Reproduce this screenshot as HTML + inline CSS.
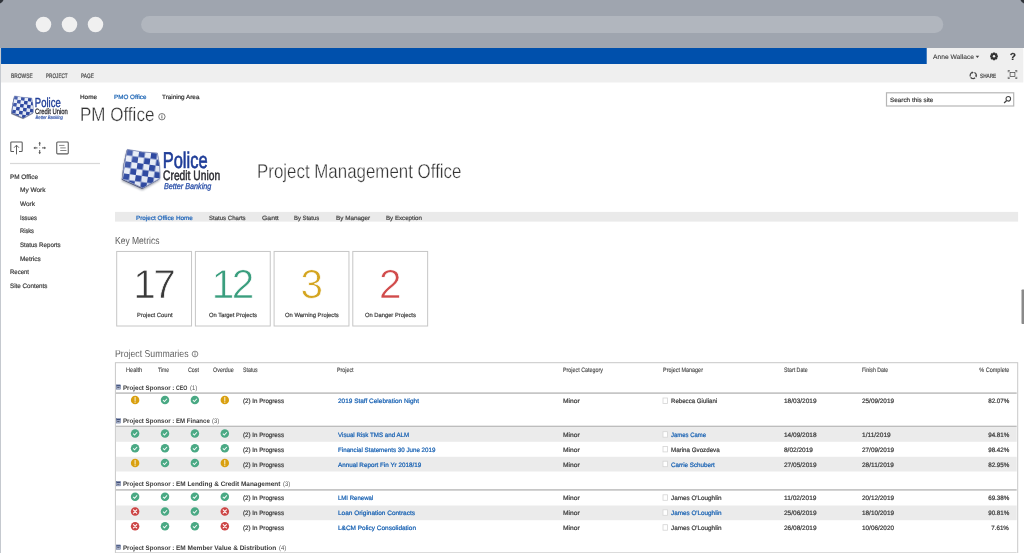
<!DOCTYPE html>
<html><head><meta charset="utf-8"><title>PM Office</title>
<style>
html,body{margin:0;padding:0;}
body{width:1024px;height:553px;overflow:hidden;position:relative;background:#fff;font-family:"Liberation Sans",sans-serif;text-rendering:geometricPrecision;}
.t{position:absolute;white-space:nowrap;}
.abs{position:absolute;}
#root{position:absolute;left:0;top:0;width:1024px;height:553px;will-change:transform;}
</style></head><body>
<div id="root">
<svg class="abs" style="left:0;top:0" width="1024" height="553" viewBox="0 0 1024 553">
<rect x="0" y="0" width="1024" height="553" fill="#9fa5af"/>
<path d="M0 0H3.5Q2.6 2.6 0 3.5Z" fill="#30343a"/><path d="M1024 0H1020.5Q1021.4 2.6 1024 3.5Z" fill="#30343a"/>
<circle cx="43.5" cy="24.6" r="7.75" fill="#f0f0f0"/>
<circle cx="69.5" cy="24.6" r="7.75" fill="#f0f0f0"/>
<circle cx="95.5" cy="24.6" r="7.75" fill="#f0f0f0"/>
<rect x="141.1" y="16.1" width="802.15" height="16.9" fill="#b1b6be" rx="8.45"/>
<rect x="0.6" y="48" width="1023.4" height="505" fill="#fff"/>
<rect x="1.05" y="48" width="925.8" height="16" fill="#0050ac"/>
<rect x="926.85" y="48" width="96.45" height="16" fill="#efefef"/>
<rect x="1.05" y="64" width="1022.25" height="18.5" fill="#efefef"/>
<rect x="886.5" y="92.8" width="127.2" height="13.2" fill="none" stroke="#b6b6b6" stroke-width="1.2"/>
<rect x="10" y="162.9" width="90" height="1.2" fill="#d8d8d8"/>
<rect x="115" y="211.9" width="903.1" height="9.7" fill="#eaeaea"/>
<rect x="116.7" y="251.45" width="74.85" height="74.55" fill="none" stroke="#c6c6c6" stroke-width="1"/>
<rect x="195.4" y="251.45" width="74.85" height="74.55" fill="none" stroke="#c6c6c6" stroke-width="1"/>
<rect x="274.1" y="251.45" width="74.85" height="74.55" fill="none" stroke="#c6c6c6" stroke-width="1"/>
<rect x="352.8" y="251.45" width="74.85" height="74.55" fill="none" stroke="#c6c6c6" stroke-width="1"/>
<rect x="115.4" y="362.7" width="902.3" height="207.3" fill="none" stroke="#c8c8c8" stroke-width="1"/>
<rect x="115.9" y="392.35" width="900.8" height="1.5" fill="#bdbdbd"/>
<rect x="663" y="398" width="4.5" height="5.5" fill="#fff" stroke="#d4d4d4" stroke-width="0.8"/>
<rect x="115.9" y="425.65" width="900.8" height="1.5" fill="#bdbdbd"/>
<rect x="115.9" y="427.1" width="900.8" height="14.7" fill="#ebebeb"/>
<rect x="663" y="431.7" width="4.5" height="5.5" fill="#fff" stroke="#d4d4d4" stroke-width="0.8"/>
<rect x="663" y="446.4" width="4.5" height="5.5" fill="#fff" stroke="#d4d4d4" stroke-width="0.8"/>
<rect x="115.9" y="456.8" width="900.8" height="14.7" fill="#ebebeb"/>
<rect x="663" y="461.2" width="4.5" height="5.5" fill="#fff" stroke="#d4d4d4" stroke-width="0.8"/>
<rect x="115.9" y="489.15" width="900.8" height="1.5" fill="#bdbdbd"/>
<rect x="663" y="494.8" width="4.5" height="5.5" fill="#fff" stroke="#d4d4d4" stroke-width="0.8"/>
<rect x="115.9" y="505.5" width="900.8" height="14.7" fill="#ebebeb"/>
<rect x="663" y="509.8" width="4.5" height="5.5" fill="#fff" stroke="#d4d4d4" stroke-width="0.8"/>
<rect x="663" y="524.7" width="4.5" height="5.5" fill="#fff" stroke="#d4d4d4" stroke-width="0.8"/>
<rect x="115.9" y="552.45" width="900.8" height="1.5" fill="#bdbdbd"/>
<rect x="1021.5" y="289.5" width="4" height="34.5" fill="#8a8a8a" rx="0.8"/>
</svg>

<div class="t" style="left:933px;top:52px;height:11px;line-height:11px;font-size:6.6px;color:#3c3c3c;transform:scaleX(1.013);transform-origin:0 50%;-webkit-text-stroke:0.1px;">Anne Wallace</div>
<svg class="abs" style="left:975px;top:55px" width="5" height="3" viewBox="-0.83 -1.14 6.94 4.29" preserveAspectRatio="none"><path d="M0 0H5L2.5 3Z" fill="#444"/></svg>
<svg class="abs" style="left:989px;top:51px" width="10" height="10" viewBox="-0.5 -0.8 10 10" preserveAspectRatio="none"><g transform="translate(4.5,4.5) scale(0.95)" fill="#333"><rect x="-1.15" y="-4.100" width="2.300" height="2" rx="0.300" transform="rotate(0)"/><rect x="-1.15" y="-4.100" width="2.300" height="2" rx="0.300" transform="rotate(45)"/><rect x="-1.15" y="-4.100" width="2.300" height="2" rx="0.300" transform="rotate(90)"/><rect x="-1.15" y="-4.100" width="2.300" height="2" rx="0.300" transform="rotate(135)"/><rect x="-1.15" y="-4.100" width="2.300" height="2" rx="0.300" transform="rotate(180)"/><rect x="-1.15" y="-4.100" width="2.300" height="2" rx="0.300" transform="rotate(225)"/><rect x="-1.15" y="-4.100" width="2.300" height="2" rx="0.300" transform="rotate(270)"/><rect x="-1.15" y="-4.100" width="2.300" height="2" rx="0.300" transform="rotate(315)"/><circle r="3.050"/><circle r="1.250" fill="#efefef"/></g></svg>
<div class="t" style="left:1009.8px;top:49px;height:17px;line-height:17px;font-size:10.2px;color:#2e2e2e;font-weight:bold;-webkit-text-stroke:0.2px;">?</div>
<div class="t" style="left:10.8px;top:71px;height:11px;line-height:11px;font-size:6.4px;color:#4a4a4a;transform:scaleX(0.763);transform-origin:0 50%;-webkit-text-stroke:0.2px;">BROWSE</div>
<div class="t" style="left:45.8px;top:71px;height:11px;line-height:11px;font-size:6.4px;color:#4a4a4a;transform:scaleX(0.727);transform-origin:0 50%;-webkit-text-stroke:0.2px;">PROJECT</div>
<div class="t" style="left:80.8px;top:71px;height:11px;line-height:11px;font-size:6.4px;color:#4a4a4a;transform:scaleX(0.751);transform-origin:0 50%;-webkit-text-stroke:0.2px;">PAGE</div>
<svg class="abs" style="left:969px;top:71px" width="9" height="9" viewBox="-0 -0.38 17.14 17.14" preserveAspectRatio="none"><g fill="none" stroke="#444" stroke-width="2.3"><path d="M2.6 10.2A5.8 5.8 0 0 1 6.6 2.4"/><path d="M10.2 2.6A5.8 5.8 0 0 1 13.600 9.400"/><path d="M11.600 12.600A5.800 5.800 0 0 1 4.600 12.800"/></g><g fill="#444"><path d="M5.200 0.600L9 2.200L6 4.800Z"/><path d="M15.600 8L13.800 11.800L11.400 8.600Z"/><path d="M2.400 11.200L6 12L4 15.200Z"/></g></svg>
<div class="t" style="left:980px;top:71px;height:11px;line-height:11px;font-size:6.2px;color:#444;transform:scaleX(0.763);transform-origin:0 50%;-webkit-text-stroke:0.2px;">SHARE</div>
<svg class="abs" style="left:1007px;top:70px" width="11" height="9" viewBox="-1.4 -0 22 18" preserveAspectRatio="none"><g fill="none" stroke="#4a4a4a" stroke-width="1.500"><rect x="4.800" y="5" width="9.600" height="8.200"/></g><g fill="none" stroke="#4a4a4a" stroke-width="1.300"><path d="M1 4.600V1H4.400M14.800 1H18.200V4.600M18.200 13.600V17.200H14.800M4.400 17.200H1V13.600"/><path d="M1 1L3.600 3.800M18.200 1L15.600 3.800M18.200 17.200L15.600 14.400M1 17.200L3.600 14.400"/></g></svg>
<svg class="abs" style="left:8px;top:92px" width="64" height="31" viewBox="-0 -1.39 111.3 53.91" preserveAspectRatio="none">
<defs>
<clipPath id="sca"><path d="M11.3 5.4 Q26 8.6 41.4 9.1 Q44.6 22 44 34.4 L26.9 44 L6.4 34.9 Q7.6 19 11.3 5.4Z"/></clipPath>
<pattern id="cka" width="12.2" height="12.2" patternUnits="userSpaceOnUse" patternTransform="translate(11.1,5.2) rotate(8)">
<rect width="12.2" height="12.2" fill="#e6ebf6"/><rect width="6.1" height="6.1" fill="#233f9c"/><rect x="6.1" y="6.1" width="6.1" height="6.1" fill="#233f9c"/>
</pattern>
<linearGradient id="lga" x1="0" y1="0" x2="1" y2="1"><stop offset="0" stop-color="#fff" stop-opacity="0.32"/><stop offset="0.45" stop-color="#fff" stop-opacity="0.05"/><stop offset="1" stop-color="#0a1a60" stop-opacity="0.18"/></linearGradient>
<filter id="bla" x="-20%" y="-20%" width="140%" height="140%"><feGaussianBlur stdDeviation="1.3"/></filter>
</defs>
<path d="M11.3 5.4 Q26 8.6 41.4 9.1 Q44.6 22 44 34.4 L26.9 44 L6.4 34.9 Q7.6 19 11.3 5.4Z" transform="translate(-0.6,2.2)" fill="#50566a" opacity="0.55" filter="url(#bla)"/>
<path d="M11.3 5.4 Q26 8.6 41.4 9.1 Q44.6 22 44 34.4 L26.9 44 L6.4 34.9 Q7.6 19 11.3 5.4Z" transform="translate(-0.7,0.9)" fill="#4a5170"/>
<path d="M11.3 5.4 Q26 8.6 41.4 9.1 Q44.6 22 44 34.4 L26.9 44 L6.4 34.9 Q7.6 19 11.3 5.4Z" fill="#233f9c"/>
<g clip-path="url(#sca)"><rect x="0" y="0" width="52" height="52" fill="url(#cka)"/><rect x="0" y="0" width="52" height="52" fill="url(#lga)"/></g>
<path d="M11.3 5.4 Q26 8.6 41.4 9.1 Q44.6 22 44 34.4 L26.9 44 L6.4 34.9 Q7.6 19 11.3 5.4Z" fill="none" stroke="#8d97bd" stroke-width="0.9"/>
<text x="46.7" y="24.3" font-family="Liberation Sans, sans-serif" font-size="22.8" fill="#1f3d98" stroke="#1f3d98" stroke-width="0.7" textLength="44.9" lengthAdjust="spacingAndGlyphs">Police</text>
<text x="47.1" y="36" font-family="Liberation Sans, sans-serif" font-size="13.6" fill="#2d2d33" stroke="#2d2d33" stroke-width="0.5" textLength="57" lengthAdjust="spacingAndGlyphs">Credit Union</text>
<text x="48" y="45.1" font-family="Liberation Sans, sans-serif" font-style="italic" font-size="8.4" fill="#2a4fa8" stroke="#2a4fa8" stroke-width="0.3" textLength="47.3" lengthAdjust="spacingAndGlyphs">Better Banking</text>
</svg>
<svg class="abs" style="left:116px;top:144px" width="110" height="52" viewBox="-0 -0 110 52" preserveAspectRatio="none">
<defs>
<clipPath id="scb"><path d="M11.3 5.4 Q26 8.6 41.4 9.1 Q44.6 22 44 34.4 L26.9 44 L6.4 34.9 Q7.6 19 11.3 5.4Z"/></clipPath>
<pattern id="ckb" width="12.2" height="12.2" patternUnits="userSpaceOnUse" patternTransform="translate(11.1,5.2) rotate(8)">
<rect width="12.2" height="12.2" fill="#e6ebf6"/><rect width="6.1" height="6.1" fill="#233f9c"/><rect x="6.1" y="6.1" width="6.1" height="6.1" fill="#233f9c"/>
</pattern>
<linearGradient id="lgb" x1="0" y1="0" x2="1" y2="1"><stop offset="0" stop-color="#fff" stop-opacity="0.32"/><stop offset="0.45" stop-color="#fff" stop-opacity="0.05"/><stop offset="1" stop-color="#0a1a60" stop-opacity="0.18"/></linearGradient>
<filter id="blb" x="-20%" y="-20%" width="140%" height="140%"><feGaussianBlur stdDeviation="1.3"/></filter>
</defs>
<path d="M11.3 5.4 Q26 8.6 41.4 9.1 Q44.6 22 44 34.4 L26.9 44 L6.4 34.9 Q7.6 19 11.3 5.4Z" transform="translate(-0.6,2.2)" fill="#50566a" opacity="0.55" filter="url(#blb)"/>
<path d="M11.3 5.4 Q26 8.6 41.4 9.1 Q44.6 22 44 34.4 L26.9 44 L6.4 34.9 Q7.6 19 11.3 5.4Z" transform="translate(-0.7,0.9)" fill="#4a5170"/>
<path d="M11.3 5.4 Q26 8.6 41.4 9.1 Q44.6 22 44 34.4 L26.9 44 L6.4 34.9 Q7.6 19 11.3 5.4Z" fill="#233f9c"/>
<g clip-path="url(#scb)"><rect x="0" y="0" width="52" height="52" fill="url(#ckb)"/><rect x="0" y="0" width="52" height="52" fill="url(#lgb)"/></g>
<path d="M11.3 5.4 Q26 8.6 41.4 9.1 Q44.6 22 44 34.4 L26.9 44 L6.4 34.9 Q7.6 19 11.3 5.4Z" fill="none" stroke="#8d97bd" stroke-width="0.9"/>
<text x="46.7" y="24.3" font-family="Liberation Sans, sans-serif" font-size="22.8" fill="#1f3d98" stroke="#1f3d98" stroke-width="0.7" textLength="44.9" lengthAdjust="spacingAndGlyphs">Police</text>
<text x="47.1" y="36" font-family="Liberation Sans, sans-serif" font-size="13.6" fill="#2d2d33" stroke="#2d2d33" stroke-width="0.5" textLength="57" lengthAdjust="spacingAndGlyphs">Credit Union</text>
<text x="48" y="45.1" font-family="Liberation Sans, sans-serif" font-style="italic" font-size="8.4" fill="#2a4fa8" stroke="#2a4fa8" stroke-width="0.3" textLength="47.3" lengthAdjust="spacingAndGlyphs">Better Banking</text>
</svg>
<div class="t" style="left:80px;top:92px;height:11px;line-height:11px;font-size:6.2px;color:#333;transform:scaleX(1.028);transform-origin:0 50%;-webkit-text-stroke:0.2px;">Home</div>
<div class="t" style="left:113.7px;top:92px;height:11px;line-height:11px;font-size:6.2px;color:#1660b2;transform:scaleX(1.018);transform-origin:0 50%;-webkit-text-stroke:0.2px;">PMO Office</div>
<div class="t" style="left:162px;top:92px;height:11px;line-height:11px;font-size:6.2px;color:#333;transform:scaleX(1.023);transform-origin:0 50%;-webkit-text-stroke:0.2px;">Training Area</div>
<div class="t" style="left:80.1px;top:100px;height:30px;line-height:30px;font-size:19.5px;color:#333;transform:scaleX(0.872);transform-origin:0 50%;-webkit-text-stroke:0.3px #fff;">PM Office</div>
<svg class="abs" style="left:158px;top:113px" width="8" height="8" viewBox="-0.43 -0 17.3 17.3" preserveAspectRatio="none"><circle cx="8" cy="8" r="6.9" fill="none" stroke="#555" stroke-width="1.7"/><rect x="7" y="6.8" width="2" height="5" fill="#555"/><rect x="7" y="3.8" width="2" height="2" fill="#555"/></svg>
<div class="t" style="left:889.5px;top:95px;height:11px;line-height:11px;font-size:6.2px;color:#3c3c3c;transform:scaleX(1.026);transform-origin:0 50%;-webkit-text-stroke:0.2px;">Search this site</div>
<svg class="abs" style="left:1003px;top:95px" width="10" height="10" viewBox="-0 -0 10 10" preserveAspectRatio="none"><circle cx="5.300" cy="3.800" r="2.300" fill="none" stroke="#444" stroke-width="1.050"/><path d="M3.700 5.500L1.100 7.900" stroke="#444" stroke-width="1.300"/></svg>
<svg class="abs" style="left:9px;top:141px" width="63" height="15" viewBox="-0.5 -0 63 15" preserveAspectRatio="none">
<g fill="none" stroke="#585858" stroke-width="1.05">
<path d="M4.5 10.5H2.1Q1.3 10.5 1.3 9.7V1.8Q1.3 1 2.1 1H11.9Q12.700 1 12.700 1.800V9.700Q12.700 10.500 11.900 10.500H9.500"/>
<path d="M7 13.400V4.300M4.600 6.700L7 4.200L9.400 6.700" stroke-width="0.95"/>
<rect x="47.250" y="1.050" width="11.500" height="11.800" rx="0.900"/>
</g>
<g fill="none" stroke="#7a7a7a" stroke-width="0.9"><path d="M49.600 4.400H55M50.750 6.900H56.200M50.750 9.500H57"/></g>
<g fill="none" stroke="#555" stroke-width="1"><path d="M30.200 1.800V4.800M30.200 9V12.200M25 6.900H28M32.500 6.900H35.600"/></g>
<g fill="#585858"><path d="M30.200 0.700L31.500 2.600H28.900ZM30.200 13.200L31.500 11.300H28.900ZM23.900 6.900L25.800 5.600V8.200ZM36.600 6.900L34.700 5.600V8.200Z"/><circle cx="30.200" cy="6.900" r="0.450"/></g>
</svg>
<div class="t" style="left:10px;top:172px;height:11px;line-height:11px;font-size:6.4px;color:#3c3c3c;-webkit-text-stroke:0.2px;">PM Office</div>
<div class="t" style="left:20px;top:185px;height:11px;line-height:11px;font-size:6.4px;color:#3c3c3c;transform:scaleX(1.015);transform-origin:0 50%;-webkit-text-stroke:0.2px;">My Work</div>
<div class="t" style="left:20px;top:199px;height:11px;line-height:11px;font-size:6.4px;color:#3c3c3c;transform:scaleX(1.012);transform-origin:0 50%;-webkit-text-stroke:0.2px;">Work</div>
<div class="t" style="left:20px;top:213px;height:11px;line-height:11px;font-size:6.4px;color:#3c3c3c;transform:scaleX(0.919);transform-origin:0 50%;-webkit-text-stroke:0.2px;">Issues</div>
<div class="t" style="left:20px;top:226px;height:11px;line-height:11px;font-size:6.4px;color:#3c3c3c;transform:scaleX(0.895);transform-origin:0 50%;-webkit-text-stroke:0.2px;">Risks</div>
<div class="t" style="left:20px;top:240px;height:11px;line-height:11px;font-size:6.4px;color:#3c3c3c;transform:scaleX(0.961);transform-origin:0 50%;-webkit-text-stroke:0.2px;">Status Reports</div>
<div class="t" style="left:20px;top:254px;height:11px;line-height:11px;font-size:6.4px;color:#3c3c3c;-webkit-text-stroke:0.2px;">Metrics</div>
<div class="t" style="left:10px;top:267px;height:11px;line-height:11px;font-size:6.4px;color:#3c3c3c;transform:scaleX(0.937);transform-origin:0 50%;-webkit-text-stroke:0.2px;">Recent</div>
<div class="t" style="left:10px;top:281px;height:11px;line-height:11px;font-size:6.4px;color:#3c3c3c;transform:scaleX(0.976);transform-origin:0 50%;-webkit-text-stroke:0.2px;">Site Contents</div>
<div class="t" style="left:257px;top:156px;height:32px;line-height:32px;font-size:20.1px;color:#333;transform:scaleX(0.841);transform-origin:0 50%;-webkit-text-stroke:0.35px #fff;">Project Management Office</div>
<div class="t" style="left:135.5px;top:213px;height:11px;line-height:11px;font-size:6.2px;color:#1a62b8;transform:scaleX(1.030);transform-origin:0 50%;-webkit-text-stroke:0.2px;">Project Office Home</div>
<div class="t" style="left:209px;top:213px;height:11px;line-height:11px;font-size:6.2px;color:#444;transform:scaleX(0.977);transform-origin:0 50%;-webkit-text-stroke:0.2px;">Status Charts</div>
<div class="t" style="left:262px;top:213px;height:11px;line-height:11px;font-size:6.2px;color:#444;transform:scaleX(1.108);transform-origin:0 50%;-webkit-text-stroke:0.2px;">Gantt</div>
<div class="t" style="left:293.8px;top:213px;height:11px;line-height:11px;font-size:6.2px;color:#444;transform:scaleX(0.953);transform-origin:0 50%;-webkit-text-stroke:0.2px;">By Status</div>
<div class="t" style="left:335.8px;top:213px;height:11px;line-height:11px;font-size:6.2px;color:#444;transform:scaleX(1.023);transform-origin:0 50%;-webkit-text-stroke:0.2px;">By Manager</div>
<div class="t" style="left:386.2px;top:213px;height:11px;line-height:11px;font-size:6.2px;color:#444;transform:scaleX(0.995);transform-origin:0 50%;-webkit-text-stroke:0.2px;">By Exception</div>
<div class="t" style="left:114.8px;top:233px;height:17px;line-height:17px;font-size:10.2px;color:#3a3a3a;transform:scaleX(0.835);transform-origin:0 50%;-webkit-text-stroke:0.12px #fff;">Key Metrics</div>
<div class="t" style="left:116.2px;width:76.5px;text-align:center;top:262px;height:44px;line-height:44px;font-size:40.5px;color:#3a3a3a;letter-spacing:-2.6px;text-indent:-2.6px;-webkit-text-stroke:0.7px #fff">17</div>
<div class="t" style="left:136.65px;top:311px;height:10px;line-height:10px;font-size:6.0px;color:#3c3c3c;transform:scaleX(0.977);transform-origin:0 50%;-webkit-text-stroke:0.2px;">Project Count</div>
<div class="t" style="left:194.8px;width:76.5px;text-align:center;top:262px;height:44px;line-height:44px;font-size:40.5px;color:#3a9e7e;letter-spacing:-2.6px;text-indent:-2.6px;-webkit-text-stroke:0.7px #fff">12</div>
<div class="t" style="left:209px;top:311px;height:10px;line-height:10px;font-size:6.0px;color:#3c3c3c;transform:scaleX(0.968);transform-origin:0 50%;-webkit-text-stroke:0.2px;">On Target Projects</div>
<div class="t" style="left:273.4px;width:76.5px;text-align:center;top:262px;height:44px;line-height:44px;font-size:40.5px;color:#d4a520;letter-spacing:-2.6px;text-indent:-2.6px;-webkit-text-stroke:0.7px #fff">3</div>
<div class="t" style="left:284.75px;top:311px;height:10px;line-height:10px;font-size:6.0px;color:#3c3c3c;transform:scaleX(0.974);transform-origin:0 50%;-webkit-text-stroke:0.2px;">On Warning Projects</div>
<div class="t" style="left:352px;width:76.5px;text-align:center;top:262px;height:44px;line-height:44px;font-size:40.5px;color:#d14b4b;letter-spacing:-2.6px;text-indent:-2.6px;-webkit-text-stroke:0.7px #fff">2</div>
<div class="t" style="left:364.8px;top:311px;height:10px;line-height:10px;font-size:6.0px;color:#3c3c3c;transform:scaleX(0.964);transform-origin:0 50%;-webkit-text-stroke:0.2px;">On Danger Projects</div>
<div class="t" style="left:114.8px;top:347px;height:15px;line-height:15px;font-size:10.0px;color:#3a3a3a;transform:scaleX(0.870);transform-origin:0 50%;-webkit-text-stroke:0.12px #fff;">Project Summaries</div>
<svg class="abs" style="left:191px;top:350px" width="8" height="8" viewBox="-1.7 -1.7 19.39 19.39" preserveAspectRatio="none"><circle cx="8" cy="8" r="6.9" fill="none" stroke="#555" stroke-width="1.7"/><rect x="7" y="6.8" width="2" height="5" fill="#555"/><rect x="7" y="3.8" width="2" height="2" fill="#555"/></svg>
<div class="t" style="left:125.7px;top:365px;height:11px;line-height:11px;font-size:6.3px;color:#484848;transform:scaleX(0.890);transform-origin:0 50%;-webkit-text-stroke:0.14px;">Health</div>
<div class="t" style="left:158.2px;top:365px;height:11px;line-height:11px;font-size:6.3px;color:#484848;transform:scaleX(0.799);transform-origin:0 50%;-webkit-text-stroke:0.14px;">Time</div>
<div class="t" style="left:188px;top:365px;height:11px;line-height:11px;font-size:6.3px;color:#484848;transform:scaleX(0.849);transform-origin:0 50%;-webkit-text-stroke:0.14px;">Cost</div>
<div class="t" style="left:213px;top:365px;height:11px;line-height:11px;font-size:6.3px;color:#484848;transform:scaleX(0.857);transform-origin:0 50%;-webkit-text-stroke:0.14px;">Overdue</div>
<div class="t" style="left:243.2px;top:365px;height:11px;line-height:11px;font-size:6.3px;color:#484848;transform:scaleX(0.823);transform-origin:0 50%;-webkit-text-stroke:0.14px;">Status</div>
<div class="t" style="left:336.7px;top:365px;height:11px;line-height:11px;font-size:6.3px;color:#484848;transform:scaleX(0.842);transform-origin:0 50%;-webkit-text-stroke:0.14px;">Project</div>
<div class="t" style="left:563.2px;top:365px;height:11px;line-height:11px;font-size:6.3px;color:#484848;transform:scaleX(0.852);transform-origin:0 50%;-webkit-text-stroke:0.14px;">Project Category</div>
<div class="t" style="left:662.5px;top:365px;height:11px;line-height:11px;font-size:6.3px;color:#484848;transform:scaleX(0.865);transform-origin:0 50%;-webkit-text-stroke:0.14px;">Project Manager</div>
<div class="t" style="left:783.5px;top:365px;height:11px;line-height:11px;font-size:6.3px;color:#484848;transform:scaleX(0.836);transform-origin:0 50%;-webkit-text-stroke:0.14px;">Start Date</div>
<div class="t" style="left:861.7px;top:365px;height:11px;line-height:11px;font-size:6.3px;color:#484848;transform:scaleX(0.822);transform-origin:0 50%;-webkit-text-stroke:0.14px;">Finish Date</div>
<div class="t" style="right:14.7px;top:365px;height:11px;line-height:11px;font-size:6.3px;color:#484848;transform:scaleX(0.874);transform-origin:100% 50%;-webkit-text-stroke:0.14px;">% Complete</div>
<svg class="abs" style="left:116px;top:384px" width="5" height="6" viewBox="-0 -1.25 10.42 12.5" preserveAspectRatio="none"><rect x="0.5" y="0.5" width="9" height="9" fill="#b4bed6" stroke="#56648c" stroke-width="1"/><rect x="1" y="1" width="8" height="2.6" fill="#3f4f7c"/><path d="M2.5 6.2H7.5" stroke="#2a2f45" stroke-width="1.5"/></svg><div class="t" style="left:122.6px;top:383px;height:11px;line-height:11px;font-size:6.6px;color:#3a3a3a;font-weight:bold;transform:scaleX(0.934);transform-origin:0 50%;">Project Sponsor :</div><div class="t" style="left:176.1px;top:383px;height:11px;line-height:11px;font-size:6.6px;color:#3a3a3a;font-weight:bold;transform:scaleX(0.797);transform-origin:0 50%;">CEO</div><div class="t" style="left:190px;top:383px;height:11px;line-height:11px;font-size:6.6px;color:#555;transform:scaleX(0.893);transform-origin:0 50%;">(1)</div>
<svg class="abs" style="left:130px;top:395px" width="10" height="10" viewBox="-1.6 -1.41 18.82 18.82" preserveAspectRatio="none"><circle cx="8" cy="8" r="8" fill="#d9a010"/><path d="M8 3.4V9.2" stroke="#fbf3dc" stroke-width="1.9" stroke-linecap="round"/><circle cx="8" cy="12.2" r="1.15" fill="#fbf3dc"/></svg><svg class="abs" style="left:160px;top:395px" width="10" height="10" viewBox="-1.41 -1.41 18.82 18.82" preserveAspectRatio="none"><circle cx="8" cy="8" r="8" fill="#4aa984"/><path d="M4.3 8.3L7 10.9L11.8 5.6" fill="none" stroke="#f4fbf8" stroke-width="1.9"/></svg><svg class="abs" style="left:190px;top:395px" width="10" height="10" viewBox="-1.22 -1.41 18.82 18.82" preserveAspectRatio="none"><circle cx="8" cy="8" r="8" fill="#4aa984"/><path d="M4.3 8.3L7 10.9L11.8 5.6" fill="none" stroke="#f4fbf8" stroke-width="1.9"/></svg><svg class="abs" style="left:220px;top:395px" width="10" height="10" viewBox="-1.04 -1.41 18.82 18.82" preserveAspectRatio="none"><circle cx="8" cy="8" r="8" fill="#d9a010"/><path d="M8 3.4V9.2" stroke="#fbf3dc" stroke-width="1.9" stroke-linecap="round"/><circle cx="8" cy="12.2" r="1.15" fill="#fbf3dc"/></svg><div class="t" style="left:243.2px;top:396px;height:11px;line-height:11px;font-size:6.3px;color:#3c3c3c;transform:scaleX(0.984);transform-origin:0 50%;-webkit-text-stroke:0.22px;">(2) In Progress</div><div class="t" style="left:338px;top:396px;height:11px;line-height:11px;font-size:6.3px;color:#1660b2;transform:scaleX(1.025);transform-origin:0 50%;-webkit-text-stroke:0.22px;">2019 Staff Celebration Night</div><div class="t" style="left:563.2px;top:396px;height:11px;line-height:11px;font-size:6.3px;color:#3c3c3c;transform:scaleX(1.060);transform-origin:0 50%;-webkit-text-stroke:0.22px;">Minor</div><div class="t" style="left:670.7px;top:396px;height:11px;line-height:11px;font-size:6.3px;color:#3c3c3c;transform:scaleX(0.970);transform-origin:0 50%;-webkit-text-stroke:0.22px;">Rebecca Giuliani</div><div class="t" style="left:783.5px;top:396px;height:11px;line-height:11px;font-size:6.3px;color:#3c3c3c;transform:scaleX(1.031);transform-origin:0 50%;-webkit-text-stroke:0.22px;">18/03/2019</div><div class="t" style="left:861.7px;top:396px;height:11px;line-height:11px;font-size:6.3px;color:#3c3c3c;transform:scaleX(1.015);transform-origin:0 50%;-webkit-text-stroke:0.22px;">25/09/2019</div><div class="t" style="right:14.7px;top:396px;height:11px;line-height:11px;font-size:6.3px;color:#3c3c3c;transform:scaleX(0.992);transform-origin:100% 50%;-webkit-text-stroke:0.22px;">82.07%</div>
<svg class="abs" style="left:116px;top:418px" width="5" height="6" viewBox="-0 -1.04 10.42 12.5" preserveAspectRatio="none"><rect x="0.5" y="0.5" width="9" height="9" fill="#b4bed6" stroke="#56648c" stroke-width="1"/><rect x="1" y="1" width="8" height="2.6" fill="#3f4f7c"/><path d="M2.5 6.2H7.5" stroke="#2a2f45" stroke-width="1.5"/></svg><div class="t" style="left:122.6px;top:416px;height:11px;line-height:11px;font-size:6.6px;color:#3a3a3a;font-weight:bold;transform:scaleX(0.934);transform-origin:0 50%;">Project Sponsor :</div><div class="t" style="left:176.1px;top:416px;height:11px;line-height:11px;font-size:6.6px;color:#3a3a3a;font-weight:bold;transform:scaleX(0.924);transform-origin:0 50%;">EM Finance</div><div class="t" style="left:212px;top:416px;height:11px;line-height:11px;font-size:6.6px;color:#555;transform:scaleX(0.893);transform-origin:0 50%;">(3)</div>
<svg class="abs" style="left:130px;top:429px" width="10" height="9" viewBox="-1.6 -0.47 18.82 16.94" preserveAspectRatio="none"><circle cx="8" cy="8" r="8" fill="#4aa984"/><path d="M4.3 8.3L7 10.9L11.8 5.6" fill="none" stroke="#f4fbf8" stroke-width="1.9"/></svg><svg class="abs" style="left:160px;top:429px" width="10" height="9" viewBox="-1.41 -0.47 18.82 16.94" preserveAspectRatio="none"><circle cx="8" cy="8" r="8" fill="#4aa984"/><path d="M4.3 8.3L7 10.9L11.8 5.6" fill="none" stroke="#f4fbf8" stroke-width="1.9"/></svg><svg class="abs" style="left:190px;top:429px" width="10" height="9" viewBox="-1.22 -0.47 18.82 16.94" preserveAspectRatio="none"><circle cx="8" cy="8" r="8" fill="#4aa984"/><path d="M4.3 8.3L7 10.9L11.8 5.6" fill="none" stroke="#f4fbf8" stroke-width="1.9"/></svg><svg class="abs" style="left:220px;top:429px" width="10" height="9" viewBox="-1.04 -0.47 18.82 16.94" preserveAspectRatio="none"><circle cx="8" cy="8" r="8" fill="#4aa984"/><path d="M4.3 8.3L7 10.9L11.8 5.6" fill="none" stroke="#f4fbf8" stroke-width="1.9"/></svg><div class="t" style="left:243.2px;top:430px;height:11px;line-height:11px;font-size:6.3px;color:#3c3c3c;transform:scaleX(0.984);transform-origin:0 50%;-webkit-text-stroke:0.22px;">(2) In Progress</div><div class="t" style="left:338px;top:430px;height:11px;line-height:11px;font-size:6.3px;color:#1660b2;transform:scaleX(0.981);transform-origin:0 50%;-webkit-text-stroke:0.22px;">Visual Risk TMS and ALM</div><div class="t" style="left:563.2px;top:430px;height:11px;line-height:11px;font-size:6.3px;color:#3c3c3c;transform:scaleX(1.060);transform-origin:0 50%;-webkit-text-stroke:0.22px;">Minor</div><div class="t" style="left:670.7px;top:430px;height:11px;line-height:11px;font-size:6.3px;color:#1660b2;transform:scaleX(0.943);transform-origin:0 50%;-webkit-text-stroke:0.22px;">James Came</div><div class="t" style="left:783.5px;top:430px;height:11px;line-height:11px;font-size:6.3px;color:#3c3c3c;transform:scaleX(1.031);transform-origin:0 50%;-webkit-text-stroke:0.22px;">14/09/2018</div><div class="t" style="left:861.7px;top:430px;height:11px;line-height:11px;font-size:6.3px;color:#3c3c3c;transform:scaleX(1.041);transform-origin:0 50%;-webkit-text-stroke:0.22px;">1/11/2019</div><div class="t" style="right:14.7px;top:430px;height:11px;line-height:11px;font-size:6.3px;color:#3c3c3c;transform:scaleX(0.992);transform-origin:100% 50%;-webkit-text-stroke:0.22px;">94.81%</div>
<svg class="abs" style="left:130px;top:444px" width="10" height="9" viewBox="-1.6 -0.09 18.82 16.94" preserveAspectRatio="none"><circle cx="8" cy="8" r="8" fill="#4aa984"/><path d="M4.3 8.3L7 10.9L11.8 5.6" fill="none" stroke="#f4fbf8" stroke-width="1.9"/></svg><svg class="abs" style="left:160px;top:444px" width="10" height="9" viewBox="-1.41 -0.09 18.82 16.94" preserveAspectRatio="none"><circle cx="8" cy="8" r="8" fill="#4aa984"/><path d="M4.3 8.3L7 10.9L11.8 5.6" fill="none" stroke="#f4fbf8" stroke-width="1.9"/></svg><svg class="abs" style="left:190px;top:444px" width="10" height="9" viewBox="-1.22 -0.09 18.82 16.94" preserveAspectRatio="none"><circle cx="8" cy="8" r="8" fill="#4aa984"/><path d="M4.3 8.3L7 10.9L11.8 5.6" fill="none" stroke="#f4fbf8" stroke-width="1.9"/></svg><svg class="abs" style="left:220px;top:444px" width="10" height="9" viewBox="-1.04 -0.09 18.82 16.94" preserveAspectRatio="none"><circle cx="8" cy="8" r="8" fill="#4aa984"/><path d="M4.3 8.3L7 10.9L11.8 5.6" fill="none" stroke="#f4fbf8" stroke-width="1.9"/></svg><div class="t" style="left:243.2px;top:445px;height:11px;line-height:11px;font-size:6.3px;color:#3c3c3c;transform:scaleX(0.984);transform-origin:0 50%;-webkit-text-stroke:0.22px;">(2) In Progress</div><div class="t" style="left:338px;top:445px;height:11px;line-height:11px;font-size:6.3px;color:#1660b2;transform:scaleX(0.987);transform-origin:0 50%;-webkit-text-stroke:0.22px;">Financial Statements 30 June 2019</div><div class="t" style="left:563.2px;top:445px;height:11px;line-height:11px;font-size:6.3px;color:#3c3c3c;transform:scaleX(1.060);transform-origin:0 50%;-webkit-text-stroke:0.22px;">Minor</div><div class="t" style="left:670.7px;top:445px;height:11px;line-height:11px;font-size:6.3px;color:#3c3c3c;transform:scaleX(0.986);transform-origin:0 50%;-webkit-text-stroke:0.22px;">Marina Gvozdeva</div><div class="t" style="left:783.5px;top:445px;height:11px;line-height:11px;font-size:6.3px;color:#3c3c3c;transform:scaleX(1.035);transform-origin:0 50%;-webkit-text-stroke:0.22px;">8/02/2019</div><div class="t" style="left:861.7px;top:445px;height:11px;line-height:11px;font-size:6.3px;color:#3c3c3c;transform:scaleX(1.015);transform-origin:0 50%;-webkit-text-stroke:0.22px;">27/09/2019</div><div class="t" style="right:14.7px;top:445px;height:11px;line-height:11px;font-size:6.3px;color:#3c3c3c;transform:scaleX(0.992);transform-origin:100% 50%;-webkit-text-stroke:0.22px;">98.42%</div>
<svg class="abs" style="left:130px;top:458px" width="10" height="10" viewBox="-1.6 -1.41 18.82 18.82" preserveAspectRatio="none"><circle cx="8" cy="8" r="8" fill="#d9a010"/><path d="M8 3.4V9.2" stroke="#fbf3dc" stroke-width="1.9" stroke-linecap="round"/><circle cx="8" cy="12.2" r="1.15" fill="#fbf3dc"/></svg><svg class="abs" style="left:160px;top:458px" width="10" height="10" viewBox="-1.41 -1.41 18.82 18.82" preserveAspectRatio="none"><circle cx="8" cy="8" r="8" fill="#4aa984"/><path d="M4.3 8.3L7 10.9L11.8 5.6" fill="none" stroke="#f4fbf8" stroke-width="1.9"/></svg><svg class="abs" style="left:190px;top:458px" width="10" height="10" viewBox="-1.22 -1.41 18.82 18.82" preserveAspectRatio="none"><circle cx="8" cy="8" r="8" fill="#4aa984"/><path d="M4.3 8.3L7 10.9L11.8 5.6" fill="none" stroke="#f4fbf8" stroke-width="1.9"/></svg><svg class="abs" style="left:220px;top:458px" width="10" height="10" viewBox="-1.04 -1.41 18.82 18.82" preserveAspectRatio="none"><circle cx="8" cy="8" r="8" fill="#d9a010"/><path d="M8 3.4V9.2" stroke="#fbf3dc" stroke-width="1.9" stroke-linecap="round"/><circle cx="8" cy="12.2" r="1.15" fill="#fbf3dc"/></svg><div class="t" style="left:243.2px;top:460px;height:11px;line-height:11px;font-size:6.3px;color:#3c3c3c;transform:scaleX(0.984);transform-origin:0 50%;-webkit-text-stroke:0.22px;">(2) In Progress</div><div class="t" style="left:338px;top:460px;height:11px;line-height:11px;font-size:6.3px;color:#1660b2;-webkit-text-stroke:0.22px;">Annual Report Fin Yr 2018/19</div><div class="t" style="left:563.2px;top:460px;height:11px;line-height:11px;font-size:6.3px;color:#3c3c3c;transform:scaleX(1.060);transform-origin:0 50%;-webkit-text-stroke:0.22px;">Minor</div><div class="t" style="left:670.7px;top:460px;height:11px;line-height:11px;font-size:6.3px;color:#1660b2;transform:scaleX(0.991);transform-origin:0 50%;-webkit-text-stroke:0.22px;">Carrie Schubert</div><div class="t" style="left:783.5px;top:460px;height:11px;line-height:11px;font-size:6.3px;color:#3c3c3c;transform:scaleX(1.031);transform-origin:0 50%;-webkit-text-stroke:0.22px;">27/05/2019</div><div class="t" style="left:861.7px;top:460px;height:11px;line-height:11px;font-size:6.3px;color:#3c3c3c;transform:scaleX(1.030);transform-origin:0 50%;-webkit-text-stroke:0.22px;">28/11/2019</div><div class="t" style="right:14.7px;top:460px;height:11px;line-height:11px;font-size:6.3px;color:#3c3c3c;transform:scaleX(0.992);transform-origin:100% 50%;-webkit-text-stroke:0.22px;">82.95%</div>
<svg class="abs" style="left:116px;top:481px" width="5" height="6" viewBox="-0 -0.63 10.42 12.5" preserveAspectRatio="none"><rect x="0.5" y="0.5" width="9" height="9" fill="#b4bed6" stroke="#56648c" stroke-width="1"/><rect x="1" y="1" width="8" height="2.6" fill="#3f4f7c"/><path d="M2.5 6.2H7.5" stroke="#2a2f45" stroke-width="1.5"/></svg><div class="t" style="left:122.6px;top:479px;height:11px;line-height:11px;font-size:6.6px;color:#3a3a3a;font-weight:bold;transform:scaleX(0.934);transform-origin:0 50%;">Project Sponsor :</div><div class="t" style="left:176.1px;top:479px;height:11px;line-height:11px;font-size:6.6px;color:#3a3a3a;font-weight:bold;transform:scaleX(0.975);transform-origin:0 50%;">EM Lending &amp; Credit Management</div><div class="t" style="left:283.1px;top:479px;height:11px;line-height:11px;font-size:6.6px;color:#555;transform:scaleX(0.893);transform-origin:0 50%;">(3)</div>
<svg class="abs" style="left:130px;top:492px" width="10" height="9" viewBox="-1.6 -0.85 18.82 16.94" preserveAspectRatio="none"><circle cx="8" cy="8" r="8" fill="#4aa984"/><path d="M4.3 8.3L7 10.9L11.8 5.6" fill="none" stroke="#f4fbf8" stroke-width="1.9"/></svg><svg class="abs" style="left:160px;top:492px" width="10" height="9" viewBox="-1.41 -0.85 18.82 16.94" preserveAspectRatio="none"><circle cx="8" cy="8" r="8" fill="#4aa984"/><path d="M4.3 8.3L7 10.9L11.8 5.6" fill="none" stroke="#f4fbf8" stroke-width="1.9"/></svg><svg class="abs" style="left:190px;top:492px" width="10" height="9" viewBox="-1.22 -0.85 18.82 16.94" preserveAspectRatio="none"><circle cx="8" cy="8" r="8" fill="#4aa984"/><path d="M4.3 8.3L7 10.9L11.8 5.6" fill="none" stroke="#f4fbf8" stroke-width="1.9"/></svg><svg class="abs" style="left:220px;top:492px" width="10" height="9" viewBox="-1.04 -0.85 18.82 16.94" preserveAspectRatio="none"><circle cx="8" cy="8" r="8" fill="#4aa984"/><path d="M4.3 8.3L7 10.9L11.8 5.6" fill="none" stroke="#f4fbf8" stroke-width="1.9"/></svg><div class="t" style="left:243.2px;top:493px;height:11px;line-height:11px;font-size:6.3px;color:#3c3c3c;transform:scaleX(0.984);transform-origin:0 50%;-webkit-text-stroke:0.22px;">(2) In Progress</div><div class="t" style="left:338px;top:493px;height:11px;line-height:11px;font-size:6.3px;color:#1660b2;transform:scaleX(0.957);transform-origin:0 50%;-webkit-text-stroke:0.22px;">LMI Renewal</div><div class="t" style="left:563.2px;top:493px;height:11px;line-height:11px;font-size:6.3px;color:#3c3c3c;transform:scaleX(1.060);transform-origin:0 50%;-webkit-text-stroke:0.22px;">Minor</div><div class="t" style="left:670.7px;top:493px;height:11px;line-height:11px;font-size:6.3px;color:#3c3c3c;transform:scaleX(1.005);transform-origin:0 50%;-webkit-text-stroke:0.22px;">James O'Loughlin</div><div class="t" style="left:783.5px;top:493px;height:11px;line-height:11px;font-size:6.3px;color:#3c3c3c;transform:scaleX(1.046);transform-origin:0 50%;-webkit-text-stroke:0.22px;">11/02/2019</div><div class="t" style="left:861.7px;top:493px;height:11px;line-height:11px;font-size:6.3px;color:#3c3c3c;transform:scaleX(1.015);transform-origin:0 50%;-webkit-text-stroke:0.22px;">20/12/2019</div><div class="t" style="right:14.7px;top:493px;height:11px;line-height:11px;font-size:6.3px;color:#3c3c3c;transform:scaleX(0.992);transform-origin:100% 50%;-webkit-text-stroke:0.22px;">69.38%</div>
<svg class="abs" style="left:130px;top:507px" width="10" height="9" viewBox="-1.6 -0.47 18.82 16.94" preserveAspectRatio="none"><circle cx="8" cy="8" r="8" fill="#cd4545"/><path d="M5 5L11 11M11 5L5 11" stroke="#fff" stroke-width="2.1" stroke-linecap="round"/></svg><svg class="abs" style="left:160px;top:507px" width="10" height="9" viewBox="-1.41 -0.47 18.82 16.94" preserveAspectRatio="none"><circle cx="8" cy="8" r="8" fill="#4aa984"/><path d="M4.3 8.3L7 10.9L11.8 5.6" fill="none" stroke="#f4fbf8" stroke-width="1.9"/></svg><svg class="abs" style="left:190px;top:507px" width="10" height="9" viewBox="-1.22 -0.47 18.82 16.94" preserveAspectRatio="none"><circle cx="8" cy="8" r="8" fill="#4aa984"/><path d="M4.3 8.3L7 10.9L11.8 5.6" fill="none" stroke="#f4fbf8" stroke-width="1.9"/></svg><svg class="abs" style="left:220px;top:507px" width="10" height="9" viewBox="-1.04 -0.47 18.82 16.94" preserveAspectRatio="none"><circle cx="8" cy="8" r="8" fill="#cd4545"/><path d="M5 5L11 11M11 5L5 11" stroke="#fff" stroke-width="2.1" stroke-linecap="round"/></svg><div class="t" style="left:243.2px;top:508px;height:11px;line-height:11px;font-size:6.3px;color:#3c3c3c;transform:scaleX(0.984);transform-origin:0 50%;-webkit-text-stroke:0.22px;">(2) In Progress</div><div class="t" style="left:338px;top:508px;height:11px;line-height:11px;font-size:6.3px;color:#1660b2;transform:scaleX(1.027);transform-origin:0 50%;-webkit-text-stroke:0.22px;">Loan Origination Contracts</div><div class="t" style="left:563.2px;top:508px;height:11px;line-height:11px;font-size:6.3px;color:#3c3c3c;transform:scaleX(1.060);transform-origin:0 50%;-webkit-text-stroke:0.22px;">Minor</div><div class="t" style="left:670.7px;top:508px;height:11px;line-height:11px;font-size:6.3px;color:#1660b2;transform:scaleX(1.005);transform-origin:0 50%;-webkit-text-stroke:0.22px;">James O'Loughlin</div><div class="t" style="left:783.5px;top:508px;height:11px;line-height:11px;font-size:6.3px;color:#3c3c3c;transform:scaleX(1.031);transform-origin:0 50%;-webkit-text-stroke:0.22px;">25/06/2019</div><div class="t" style="left:861.7px;top:508px;height:11px;line-height:11px;font-size:6.3px;color:#3c3c3c;transform:scaleX(1.015);transform-origin:0 50%;-webkit-text-stroke:0.22px;">18/10/2019</div><div class="t" style="right:14.7px;top:508px;height:11px;line-height:11px;font-size:6.3px;color:#3c3c3c;transform:scaleX(0.992);transform-origin:100% 50%;-webkit-text-stroke:0.22px;">90.81%</div>
<svg class="abs" style="left:130px;top:522px" width="10" height="9" viewBox="-1.6 -0.09 18.82 16.94" preserveAspectRatio="none"><circle cx="8" cy="8" r="8" fill="#cd4545"/><path d="M5 5L11 11M11 5L5 11" stroke="#fff" stroke-width="2.1" stroke-linecap="round"/></svg><svg class="abs" style="left:160px;top:522px" width="10" height="9" viewBox="-1.41 -0.09 18.82 16.94" preserveAspectRatio="none"><circle cx="8" cy="8" r="8" fill="#4aa984"/><path d="M4.3 8.3L7 10.9L11.8 5.6" fill="none" stroke="#f4fbf8" stroke-width="1.9"/></svg><svg class="abs" style="left:190px;top:522px" width="10" height="9" viewBox="-1.22 -0.09 18.82 16.94" preserveAspectRatio="none"><circle cx="8" cy="8" r="8" fill="#4aa984"/><path d="M4.3 8.3L7 10.9L11.8 5.6" fill="none" stroke="#f4fbf8" stroke-width="1.9"/></svg><svg class="abs" style="left:220px;top:522px" width="10" height="9" viewBox="-1.04 -0.09 18.82 16.94" preserveAspectRatio="none"><circle cx="8" cy="8" r="8" fill="#cd4545"/><path d="M5 5L11 11M11 5L5 11" stroke="#fff" stroke-width="2.1" stroke-linecap="round"/></svg><div class="t" style="left:243.2px;top:523px;height:11px;line-height:11px;font-size:6.3px;color:#3c3c3c;transform:scaleX(0.984);transform-origin:0 50%;-webkit-text-stroke:0.22px;">(2) In Progress</div><div class="t" style="left:338px;top:523px;height:11px;line-height:11px;font-size:6.3px;color:#1660b2;transform:scaleX(1.027);transform-origin:0 50%;-webkit-text-stroke:0.22px;">L&amp;CM Policy Consolidation</div><div class="t" style="left:563.2px;top:523px;height:11px;line-height:11px;font-size:6.3px;color:#3c3c3c;transform:scaleX(1.060);transform-origin:0 50%;-webkit-text-stroke:0.22px;">Minor</div><div class="t" style="left:670.7px;top:523px;height:11px;line-height:11px;font-size:6.3px;color:#3c3c3c;transform:scaleX(1.005);transform-origin:0 50%;-webkit-text-stroke:0.22px;">James O'Loughlin</div><div class="t" style="left:783.5px;top:523px;height:11px;line-height:11px;font-size:6.3px;color:#3c3c3c;transform:scaleX(1.031);transform-origin:0 50%;-webkit-text-stroke:0.22px;">26/08/2019</div><div class="t" style="left:861.7px;top:523px;height:11px;line-height:11px;font-size:6.3px;color:#3c3c3c;transform:scaleX(1.015);transform-origin:0 50%;-webkit-text-stroke:0.22px;">10/06/2020</div><div class="t" style="right:14.7px;top:523px;height:11px;line-height:11px;font-size:6.3px;color:#3c3c3c;transform:scaleX(0.980);transform-origin:100% 50%;-webkit-text-stroke:0.22px;">7.61%</div>
<svg class="abs" style="left:116px;top:544px" width="5" height="6" viewBox="-0 -1.46 10.42 12.5" preserveAspectRatio="none"><rect x="0.5" y="0.5" width="9" height="9" fill="#b4bed6" stroke="#56648c" stroke-width="1"/><rect x="1" y="1" width="8" height="2.6" fill="#3f4f7c"/><path d="M2.5 6.2H7.5" stroke="#2a2f45" stroke-width="1.5"/></svg><div class="t" style="left:122.6px;top:543px;height:11px;line-height:11px;font-size:6.6px;color:#3a3a3a;font-weight:bold;transform:scaleX(0.934);transform-origin:0 50%;">Project Sponsor :</div><div class="t" style="left:176.1px;top:543px;height:11px;line-height:11px;font-size:6.6px;color:#3a3a3a;font-weight:bold;transform:scaleX(0.987);transform-origin:0 50%;">EM Member Value &amp; Distribution</div><div class="t" style="left:278.7px;top:543px;height:11px;line-height:11px;font-size:6.6px;color:#555;transform:scaleX(0.893);transform-origin:0 50%;">(4)</div>
</div>
</body></html>
